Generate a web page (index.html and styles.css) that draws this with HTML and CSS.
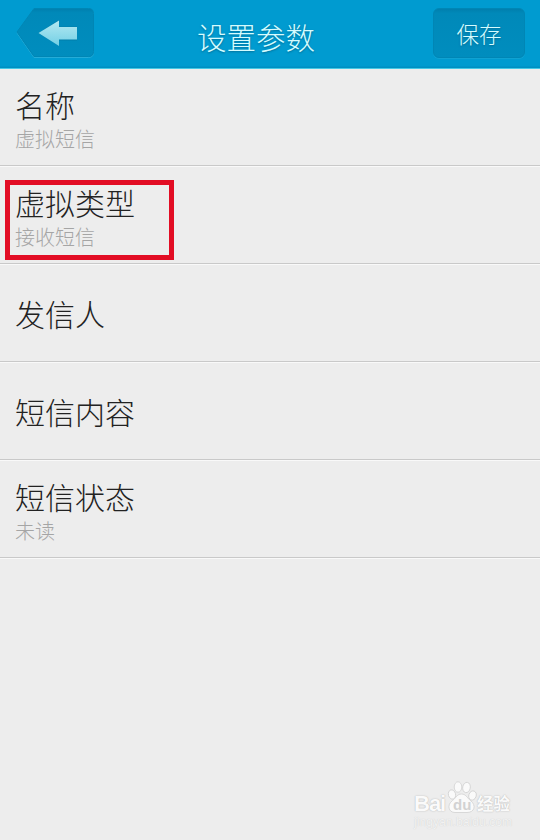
FILE: index.html
```html
<!DOCTYPE html>
<html lang="zh-CN">
<head>
<meta charset="utf-8">
<title>设置参数</title>
<link rel="stylesheet" href="styles.css">
</head>
<body>
<header class="bar">
  <a class="back" aria-label="返回">
    <svg width="82" height="54" viewBox="0 0 82 54">
      <defs>
        <linearGradient id="arrow" x1="0" y1="0" x2="0" y2="1"><stop offset="0" stop-color="#b4e9f1"/><stop offset="1" stop-color="#72cfe5"/></linearGradient>
        <linearGradient id="btn" x1="0" y1="0" x2="0" y2="1"><stop offset="0" stop-color="#007fae"/><stop offset=".09" stop-color="#0089b9"/><stop offset="1" stop-color="#008dbe"/></linearGradient>
      </defs>
      <path d="M18 3H72.500Q77.500 3 77.500 8V46.500Q77.500 51.500 72.500 51.500H18L1 27Z" fill="none" stroke="#25acd8"/>
      <path d="M18 2.500H72.500Q77.500 2.500 77.500 7.500V45.500Q77.500 50.500 72.500 50.500H18L1 26Z" fill="url(#btn)" stroke="#0086b5"/>
      <path d="M22.500 27L43 14V20.500H61V34.500H43V40Z" fill="#007eaa"/>
      <path d="M22.500 27L43 14.500V21H61V33.500H43V40Z" fill="url(#arrow)"/>
    </svg>
  </a>
  <h1 class="title">设置参数</h1>
  <button class="save">保存</button>
</header>
<main class="list">
  <section class="row"><div class="name">名称</div><div class="value">虚拟短信</div></section>
  <section class="row marked"><div class="name">虚拟类型</div><div class="value">接收短信</div></section>
  <section class="row"><div class="name">发信人</div></section>
  <section class="row"><div class="name">短信内容</div></section>
  <section class="row"><div class="name">短信状态</div><div class="value">未读</div></section>
</main>
<div class="watermark">
  <div class="brand">
    <span class="bai">Bai</span>
    <span class="paw">
      <svg width="30" height="33" viewBox="0 0 30 33">
        <g fill="#fafafa" stroke="#d0d0d0" stroke-width=".8">
          <ellipse cx="5" cy="13.500" rx="3.600" ry="4.700" transform="rotate(-15 5 13.500)"/>
          <ellipse cx="11" cy="6" rx="3.800" ry="5.200"/>
          <ellipse cx="19.500" cy="6.500" rx="3.800" ry="5.200" transform="rotate(10 19.500 6.500)"/>
          <ellipse cx="25.500" cy="14.500" rx="3.700" ry="4.700" transform="rotate(20 25.500 14.500)"/>
          <path d="M14.500 13C10 13 9 17 5.500 19.500C-.5 24 1.500 31.500 8 31.500H20C28 31.500 29 24 24 20C20 17 19 13 14.500 13Z"/>
        </g>
      </svg>
      <span class="du">du</span>
    </span>
    <span class="jing">经验</span>
  </div>
  <div class="site">jingyan.baidu.com</div>
</div>
</body>
</html>
```
FILE: styles.css
```css
*, *::after { box-sizing: border-box; }
body {
  margin: 0;
  height: 840px;
  overflow: hidden;
  position: relative;
  background: #ededed;
  color: #222;
  font-family: "Noto Sans CJK SC", sans-serif;
  font-weight: 300;
}
.bar {
  height: 69px;
  display: grid;
  grid-template-columns: 94px 1fr 92px;
  padding: 0 15px 0 16px;
  background: linear-gradient(#009bd0, #009bd0 66px, #0090c2 67px, #0090c2 68px, #45c8e6 68px);
}
.back { padding-top: 6px; }
.back svg { display: block; }
.title {
  margin: 13px 0 0;
  padding-right: 31px;
  text-align: center;
  font-size: 29.500px;
  font-weight: 200;
  line-height: 46px;
  color: #d5fcff;
  text-shadow: 0 1px 2px #006d96;
}
.save {
  height: 50px;
  margin: 8px 0 0;
  padding: 0;
  border: 1px solid #0086b5;
  border-radius: 6px;
  background: linear-gradient(#007fae, #0089b9 9%, #008dbe);
  box-shadow: 0 1px 0 #10a2d2;
  color: #d5fcff;
  font: 200 22.500px/48px "Noto Sans CJK SC", sans-serif;
  text-shadow: 0 1px 2px #006d96;
}
.row {
  height: 98px;
  padding: 1px 15px 0;
  display: flex;
  flex-direction: column;
  justify-content: center;
  border-bottom: 1px solid #c9c9c9;
  box-shadow: 0 1px 0 #f9f9f9;
  position: relative;
}
.row:first-child { height: 97px; }
.name { font-size: 30px; line-height: 39px; }
.name:not(:last-child) { margin-top: 4px; }
.value { font-size: 20px; line-height: 30px; color: #a5a5a5; }
.marked::after {
  content: "";
  position: absolute;
  left: 5px;
  top: 14px;
  width: 169px;
  height: 80px;
  border: 5px solid #e20d24;
}
.watermark {
  position: absolute;
  left: 414px;
  top: 781px;
  width: 100px;
  color: #fafafa;
}
.brand { display: flex; height: 33px; align-items: flex-end; }
.bai, .jing {
  text-shadow: 0 0 1px #b5b5b5, 0 0 2px #d0d0d0;
}
.bai { width: 33px; font: bold 22px/20px "Liberation Sans", sans-serif; letter-spacing: -1px; }
.paw { position: relative; width: 30px; height: 33px; }
.du { position: absolute; left: 6px; top: 16px; font: bold 15px/15px "Liberation Sans", sans-serif; color: #d2d2d2; }
.jing { font-size: 16.500px; line-height: 21px; font-weight: 700; white-space: nowrap; }
.site { font: 12.200px/16px "Liberation Sans", sans-serif; color: #f2f2f2; text-shadow: 0 0 1px #c9c9c9; }
```
